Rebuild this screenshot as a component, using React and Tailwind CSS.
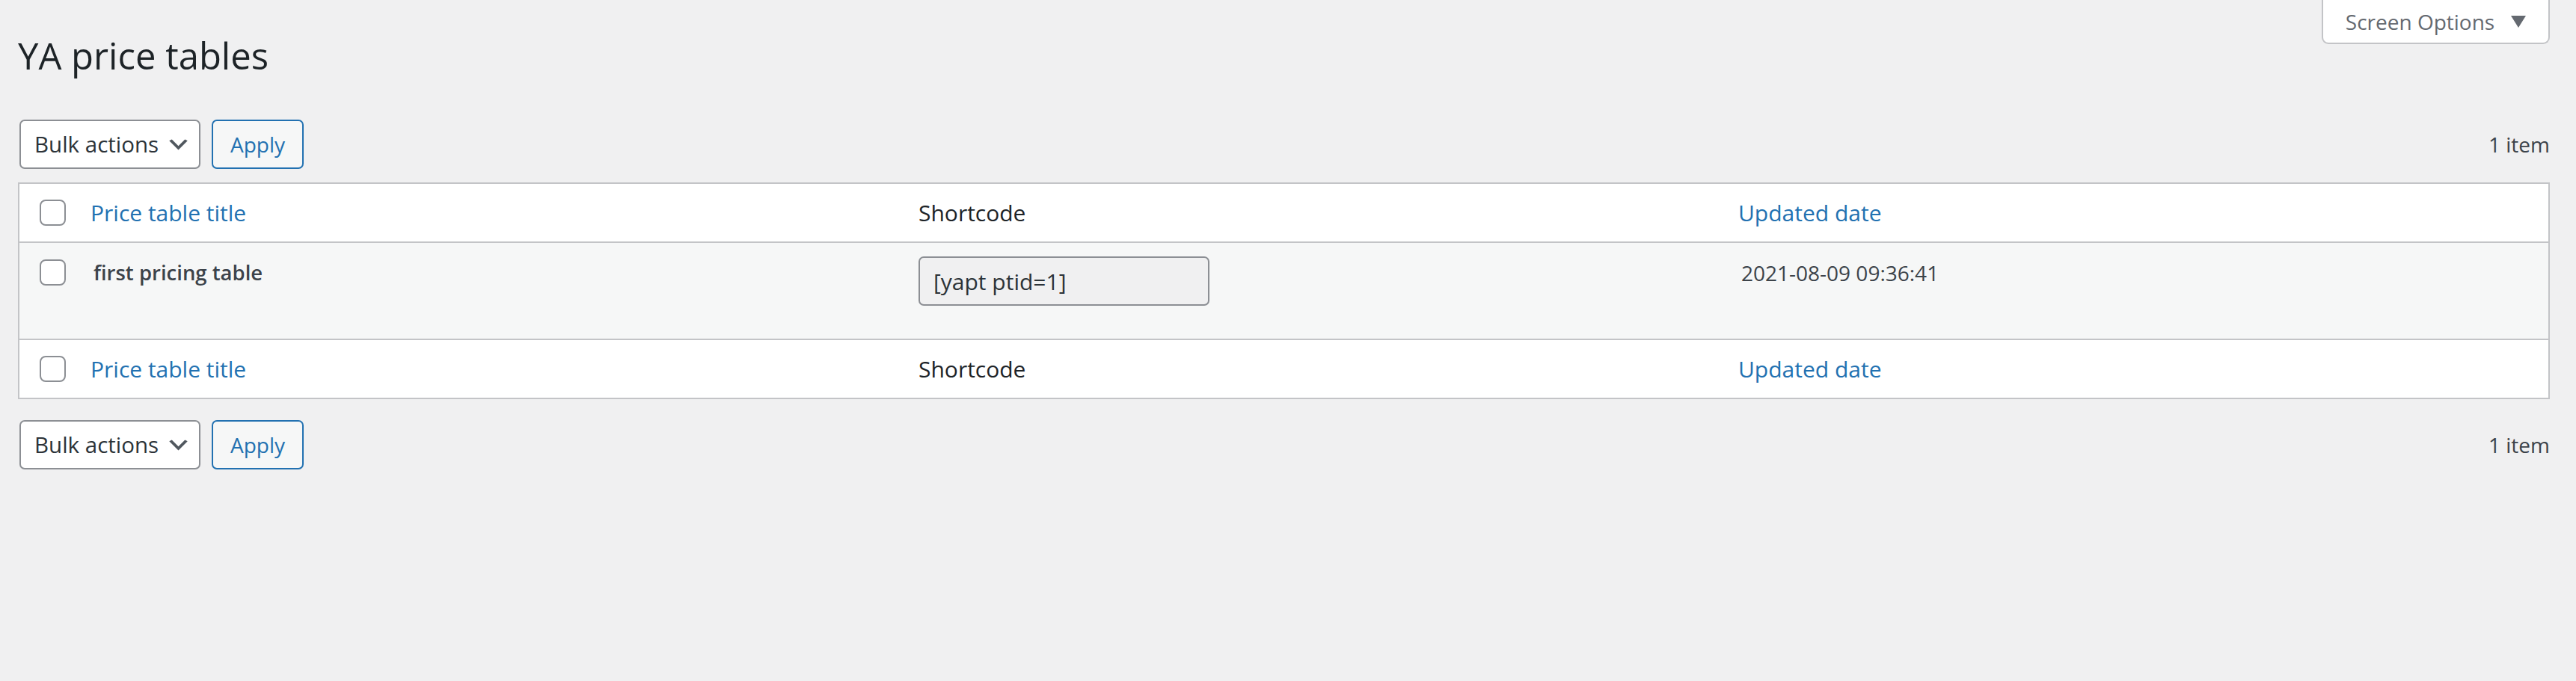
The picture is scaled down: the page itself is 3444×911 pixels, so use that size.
import { useState } from 'react'

const font = "font-['Open_Sans','Noto_Sans',sans-serif]"

function Checkbox() {
  return <span className="block w-[35px] h-[35px] rounded-[8px] border-2 border-[#8c8f94] bg-white" />
}

function Chevron() {
  return (
    <svg viewBox="0 0 20 20" className="w-[35px] h-[35px] fill-[#50575e]">
      <path d="M5 6l5 5 5-5 2 1-7 7-7-7 2-1z" />
    </svg>
  )
}

function TableNav() {
  return (
    <div className="flex items-center justify-between h-[66px]">
      <div className="flex items-center gap-[15px] pl-[2px]">
        <div className="flex items-center justify-between w-[242px] h-[66px] rounded-[7px] border-2 border-[#8c8f94] bg-white pl-[18px] pr-[10px] text-[29.5px] text-[#2c3338]">
          <span>Bulk actions</span>
          <Chevron />
        </div>
        <button className="h-[66px] w-[123px] rounded-[7px] border-2 border-[#2271b1] bg-[#f6f7f7] text-[28px] text-[#2271b1]">Apply</button>
      </div>
      <span className="text-[28px] text-[#3c434a]">1 item</span>
    </div>
  )
}

function HeadRow({ top }) {
  return (
    <div className={`grid grid-cols-[75px_1107px_1096px_1fr] items-center h-[79px] bg-white ${top ? 'border-b-2' : 'border-t-2'} border-[#c3c4c7] text-[30px]`}>
      <div className="pl-[27px]"><Checkbox /></div>
      <div className="pl-[20px] text-[#2271b1]">Price table title</div>
      <div className="pl-[20px] text-[#1d2327]">Shortcode</div>
      <div className="pl-[20px] text-[#2271b1]">Updated date</div>
    </div>
  )
}

export default function App() {
  const [code] = useState('[yapt ptid=1]')
  return (
    <div className={`min-h-[911px] bg-[#f0f0f1] pl-[24px] pr-[35px] ${font}`}>
      <div className="flex items-start justify-between">
        <h1 className="mt-[42px] text-[49px] leading-[65px] text-[#1d2327]">YA price tables</h1>
        <button className="flex items-center gap-[22px] h-[59px] w-[305px] justify-center rounded-b-[9px] border-2 border-t-0 border-[#c3c4c7] bg-white text-[28px] text-[#646970]">
          <span>Screen Options</span>
          <svg viewBox="0 0 10 8" className="w-[20px] h-[16px] fill-[#646970]"><path d="M0 0h10L5 8z" /></svg>
        </button>
      </div>

      <div className="mt-[53px]"><TableNav /></div>

      <div className="mt-[18px] border-2 border-[#c3c4c7] bg-white">
        <HeadRow top />
        <div className="grid grid-cols-[75px_1107px_1096px_1fr] items-start h-[128px] bg-[#f6f7f7]">
          <div className="pl-[27px] pt-[22px]"><Checkbox /></div>
          <div className="pl-[24px] pt-[20px] leading-[40px] text-[27.5px] font-semibold text-[#3c434a]">first pricing table</div>
          <div className="pl-[20px] pt-[18px]">
            <div className="flex items-center w-[389px] h-[66px] rounded-[7px] border-2 border-[#8c8f94] bg-[#f0f0f1] pl-[18px] text-[30px] text-[#2c3338]">{code}</div>
          </div>
          <div className="pl-[24px] pt-[20px] leading-[40px] text-[28px] text-[#3c434a]">2021-08-09 09:36:41</div>
        </div>
        <HeadRow />
      </div>

      <div className="mt-[28px]"><TableNav /></div>
    </div>
  )
}
